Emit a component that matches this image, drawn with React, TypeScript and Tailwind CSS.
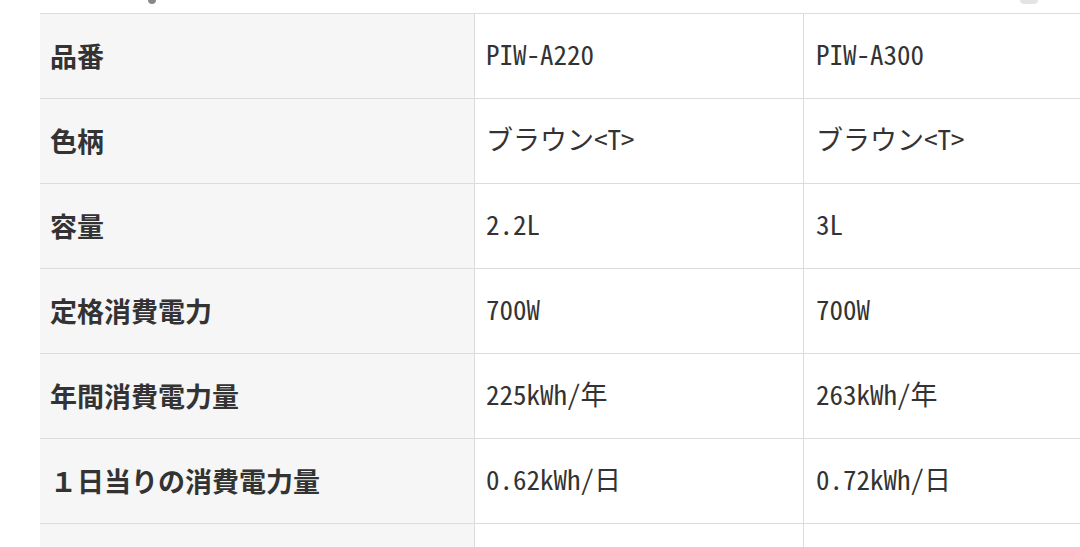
const rows: [string, string, string][] = [
  ["品番", "PIW-A220", "PIW-A300"],
  ["色柄", "ブラウン<T>", "ブラウン<T>"],
  ["容量", "2.2L", "3L"],
  ["定格消費電力", "700W", "700W"],
  ["年間消費電力量", "225kWh/年", "263kWh/年"],
  ["１日当りの消費電力量", "0.62kWh/日", "0.72kWh/日"],
  ["", "", ""],
];

export default function App() {
  return (
    <div className="relative h-[547px] w-[1080px] overflow-hidden bg-white text-[#333]">
      {/* cut-off bits of the content above the table */}
      <div className="relative h-[13px]">
        <span className="absolute left-[148px] top-0 h-[4px] w-[8px] rounded-b-full bg-[#888]" />
        <span className="absolute left-[1020px] top-0 h-[4px] w-[18px] rounded-b bg-[#e4e4e4]" />
      </div>
      <div className="ml-[40px] w-[1100px] border-t border-[#dcdcdc]">
        {rows.map(([label, a, b], i) => (
          <div key={i} className="flex h-[85px] border-b border-[#dcdcdc]">
            <div className="flex w-[434px] shrink-0 items-center bg-[#f6f6f6] pl-[10px] font-['Noto_Sans_CJK_JP',sans-serif] text-[27px] font-bold text-[#333]">
              {label}
            </div>
            <div className="flex w-[329px] shrink-0 items-center border-l border-[#dcdcdc] pb-[3px] pl-[11px] font-['Noto_Sans_Mono_CJK_JP','Noto_Sans_CJK_JP',monospace] text-[27px] text-[#333]">
              {a}
            </div>
            <div className="flex w-[329px] shrink-0 items-center border-l border-[#dcdcdc] pb-[3px] pl-[12px] font-['Noto_Sans_Mono_CJK_JP','Noto_Sans_CJK_JP',monospace] text-[27px] text-[#333]">
              {b}
            </div>
          </div>
        ))}
      </div>
    </div>
  );
}
